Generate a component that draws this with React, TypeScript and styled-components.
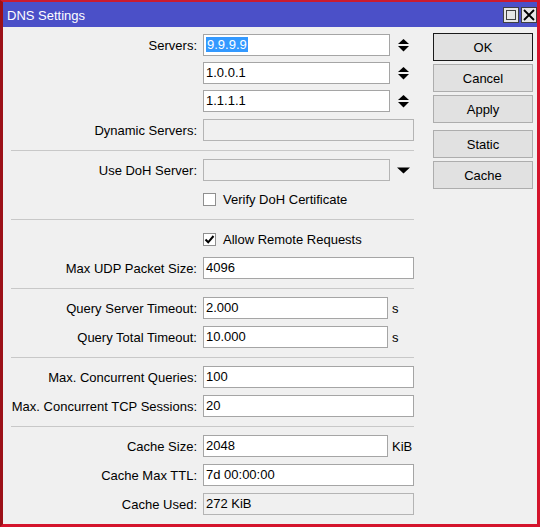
import React from "react";
import styled, { createGlobalStyle, css } from "styled-components";

const GlobalStyle = createGlobalStyle`
    html, body {
        margin: 0;
        padding: 0;
        background: #f0f0f0;
    }
    body {
        font-family: "Liberation Sans", Arial, sans-serif;
        font-size: 13px;
        color: #000;
    }
`;

const Window = styled.div`
    box-sizing: border-box;
    width: 540px;
    height: 527px;
    display: flex;
    flex-direction: column;
    background: #f0f0f0;
    border-top: 2px solid #cc1b2e;
    border-right: 3px solid #d4142c;
    border-bottom: 3px solid #d4142c;
    border-left: 3px solid #9c1018;
`;

const TitleBar = styled.div`
    height: 25px;
    display: flex;
    align-items: center;
    justify-content: space-between;
    background: #4b50c8;
    color: #fff;
    padding-left: 4px;
`;

const Title = styled.span`
    font-size: 13px;
    padding-top: 1px;
`;

const TitleButtons = styled.div`
    display: flex;
    gap: 2px;
    align-items: center;
`;

const TitleButton = styled.div`
    width: 16px;
    height: 16px;
    box-sizing: border-box;
    background: #e6e6e6;
    border: 1px solid #404040;
    display: flex;
    align-items: center;
    justify-content: center;
`;

const Body = styled.div`
    display: flex;
    align-items: flex-start;
    gap: 19px;
    padding: 6px 4px 0 8px;
`;

const Form = styled.div`
    width: 403px;
    display: flex;
    flex-direction: column;
    gap: 7px;
    padding-top: 1px;
`;

const ServerGroup = styled.div`
    display: flex;
    flex-direction: column;
    gap: 6px;
`;

const Row = styled.div`
    display: grid;
    grid-template-columns: 186px 211px;
    column-gap: 6px;
    align-items: center;
    height: 22px;
`;

const Label = styled.span`
    text-align: right;
    white-space: nowrap;
`;

const Field = styled.div`
    display: flex;
    align-items: center;
`;

const TextBox = styled.div<{ $width?: number; $disabled?: boolean }>`
    box-sizing: border-box;
    width: ${(p) => p.$width ?? 211}px;
    height: 22px;
    line-height: 20px;
    padding: 0 2px;
    border: 1px solid ${(p) => (p.$disabled ? "#b4b4b4" : "#a5a5a5")};
    background: ${(p) => (p.$disabled ? "#f0f0f0" : "#fff")};
    white-space: nowrap;
    overflow: hidden;
`;

const Selected = styled.span`
    background: #3399ff;
    color: #fff;
    padding: 0 1px;
`;

const Unit = styled.span`
    margin-left: 4px;
`;

const Separator = styled.div`
    height: 1px;
    background: #c8c8c8;
    margin: 2px 0 1px;
`;

const CheckBox = styled.div`
    box-sizing: border-box;
    width: 13px;
    height: 13px;
    border: 1px solid #8f8f8f;
    background: #fff;
    display: flex;
    align-items: center;
    justify-content: center;
    margin-right: 7px;
`;

const Buttons = styled.div`
    width: 100px;
    display: flex;
    flex-direction: column;
    gap: 3px;
`;

const Button = styled.div<{ $default?: boolean; $spaced?: boolean }>`
    box-sizing: border-box;
    height: 28px;
    display: flex;
    align-items: center;
    justify-content: center;
    background: #e1e1e1;
    border: 1px solid #adadad;
    ${(p) =>
        p.$default &&
        css`
            border-color: #1a1a1a;
        `}
    ${(p) =>
        p.$spaced &&
        css`
            margin-top: 4px;
        `}
`;

const IconSlot = styled.svg`
    margin-left: 7px;
    flex: none;
`;

const Spinner = () => (
    <IconSlot width="13" height="13" viewBox="0 0 13 13">
        <polygon points="1,5 6.5,0 12,5" fill="#000" />
        <polygon points="1,7 12,7 6.5,12.5" fill="#000" />
    </IconSlot>
);

const DropArrow = () => (
    <IconSlot width="13" height="7" viewBox="0 0 13 7">
        <polygon points="0,0.5 13,0.5 6.5,6.5" fill="#000" />
    </IconSlot>
);

const Check = () => (
    <svg width="11" height="11" viewBox="0 0 11 11">
        <path d="M1.5 5.5 L4.2 8.3 L9.5 2" stroke="#000" strokeWidth="2" fill="none" />
    </svg>
);

export default function App() {
    return (
        <>
            <GlobalStyle />
            <Window>
                <TitleBar>
                    <Title>DNS Settings</Title>
                    <TitleButtons>
                        <TitleButton>
                            <svg width="10" height="10" viewBox="0 0 10 10">
                                <rect x="0.5" y="0.5" width="9" height="9" fill="none" stroke="#404040" />
                            </svg>
                        </TitleButton>
                        <TitleButton>
                            <svg width="12" height="12" viewBox="0 0 12 12">
                                <path d="M1 1 L11 11 M11 1 L1 11" stroke="#000" strokeWidth="1.8" />
                            </svg>
                        </TitleButton>
                    </TitleButtons>
                </TitleBar>
                <Body>
                    <Form>
                        <ServerGroup>
                            <Row>
                                <Label>Servers:</Label>
                                <Field>
                                    <TextBox $width={187}>
                                        <Selected>9.9.9.9</Selected>
                                    </TextBox>
                                    <Spinner />
                                </Field>
                            </Row>
                            <Row>
                                <span />
                                <Field>
                                    <TextBox $width={187}>1.0.0.1</TextBox>
                                    <Spinner />
                                </Field>
                            </Row>
                            <Row>
                                <span />
                                <Field>
                                    <TextBox $width={187}>1.1.1.1</TextBox>
                                    <Spinner />
                                </Field>
                            </Row>
                        </ServerGroup>
                        <Row>
                            <Label>Dynamic Servers:</Label>
                            <TextBox $disabled />
                        </Row>
                        <Separator />
                        <Row>
                            <Label>Use DoH Server:</Label>
                            <Field>
                                <TextBox $width={187} $disabled />
                                <DropArrow />
                            </Field>
                        </Row>
                        <Row>
                            <span />
                            <Field>
                                <CheckBox />
                                <span>Verify DoH Certificate</span>
                            </Field>
                        </Row>
                        <Separator />
                        <Row>
                            <span />
                            <Field>
                                <CheckBox>
                                    <Check />
                                </CheckBox>
                                <span>Allow Remote Requests</span>
                            </Field>
                        </Row>
                        <Row>
                            <Label>Max UDP Packet Size:</Label>
                            <TextBox>4096</TextBox>
                        </Row>
                        <Separator />
                        <Row>
                            <Label>Query Server Timeout:</Label>
                            <Field>
                                <TextBox $width={185}>2.000</TextBox>
                                <Unit>s</Unit>
                            </Field>
                        </Row>
                        <Row>
                            <Label>Query Total Timeout:</Label>
                            <Field>
                                <TextBox $width={185}>10.000</TextBox>
                                <Unit>s</Unit>
                            </Field>
                        </Row>
                        <Separator />
                        <Row>
                            <Label>Max. Concurrent Queries:</Label>
                            <TextBox>100</TextBox>
                        </Row>
                        <Row>
                            <Label>Max. Concurrent TCP Sessions:</Label>
                            <TextBox>20</TextBox>
                        </Row>
                        <Separator />
                        <Row>
                            <Label>Cache Size:</Label>
                            <Field>
                                <TextBox $width={185}>2048</TextBox>
                                <Unit>KiB</Unit>
                            </Field>
                        </Row>
                        <Row>
                            <Label>Cache Max TTL:</Label>
                            <TextBox>7d 00:00:00</TextBox>
                        </Row>
                        <Row>
                            <Label>Cache Used:</Label>
                            <TextBox $disabled>272 KiB</TextBox>
                        </Row>
                    </Form>
                    <Buttons>
                        <Button $default>OK</Button>
                        <Button>Cancel</Button>
                        <Button>Apply</Button>
                        <Button $spaced>Static</Button>
                        <Button>Cache</Button>
                    </Buttons>
                </Body>
            </Window>
        </>
    );
}
